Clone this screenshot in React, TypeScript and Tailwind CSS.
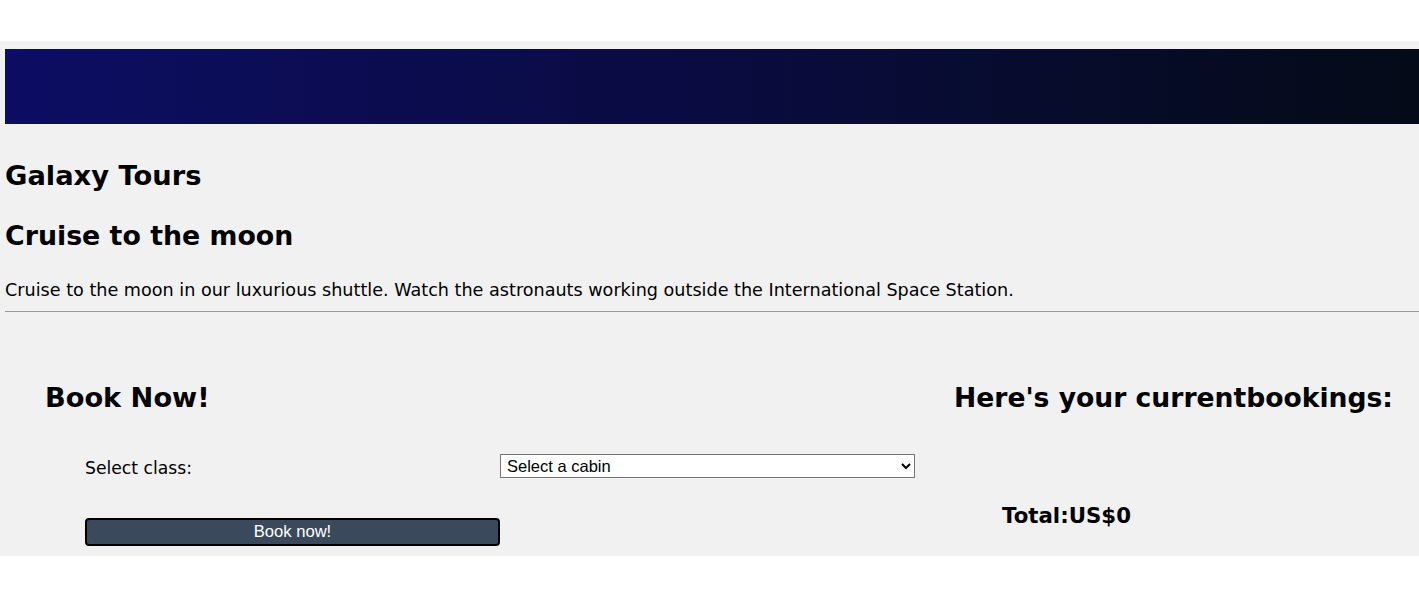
import React from "react";

export default function App() {
  return (
    <div className="min-h-[597px] bg-white pt-[41px]" style={{ fontFamily: '"DejaVu Sans", sans-serif' }}>
      <div className="h-[515px] overflow-hidden bg-[#f1f1f1] pl-[5px] text-black">
        <div className="h-[75px] mt-[8px] bg-gradient-to-r from-[#0c0d63] via-[#0a0b40] to-[#050a18]" />
        <h1 className="mt-[36px] text-[27.3px] font-bold leading-[32px]">Galaxy Tours</h1>
        <h2 className="mt-[28px] text-[26.8px] font-bold leading-[32px]">Cruise to the moon</h2>
        <p className="mt-[27px] text-[17.6px] leading-[22px]">
          Cruise to the moon in our luxurious shuttle. Watch the astronauts working outside the International Space Station.
        </p>
        <hr className="mt-[10px] border-0 border-t border-[#9a9a9a]" />
        <div className="flex justify-between pt-[70px]">
          <div className="pl-[40px]">
            <h3 className="text-[27.2px] font-bold leading-[32px]">Book Now!</h3>
            <div className="mt-[40px] pl-[40px] grid grid-cols-[415px_415px] items-center">
              <label className="pt-[3px] text-[17.2px] leading-[20px]">Select class:</label>
              <select
                className="h-[24px] w-[415px] border border-[#767676] bg-white pl-[2px] text-[16.5px] text-black"
                style={{ fontFamily: '"Liberation Sans", Arial, sans-serif', appearance: "auto" }}
                defaultValue=""
              >
                <option value="">Select a cabin</option>
              </select>
              <button
                className="mt-[40px] h-[28px] w-[415px] rounded-[4px] border-2 border-black bg-[#3a4a5c] text-[16.6px] text-white"
                style={{ fontFamily: '"Liberation Sans", Arial, sans-serif' }}
              >
                Book now!
              </button>
            </div>
          </div>
          <div className="pr-[26px]">
            <h3 className="text-[26.6px] font-bold leading-[32px]">Here's your currentbookings:</h3>
            <div className="mt-[90px] pl-[48px] text-[21.3px] font-bold leading-[24px]">Total:US$0</div>
          </div>
        </div>
      </div>
    </div>
  );
}
